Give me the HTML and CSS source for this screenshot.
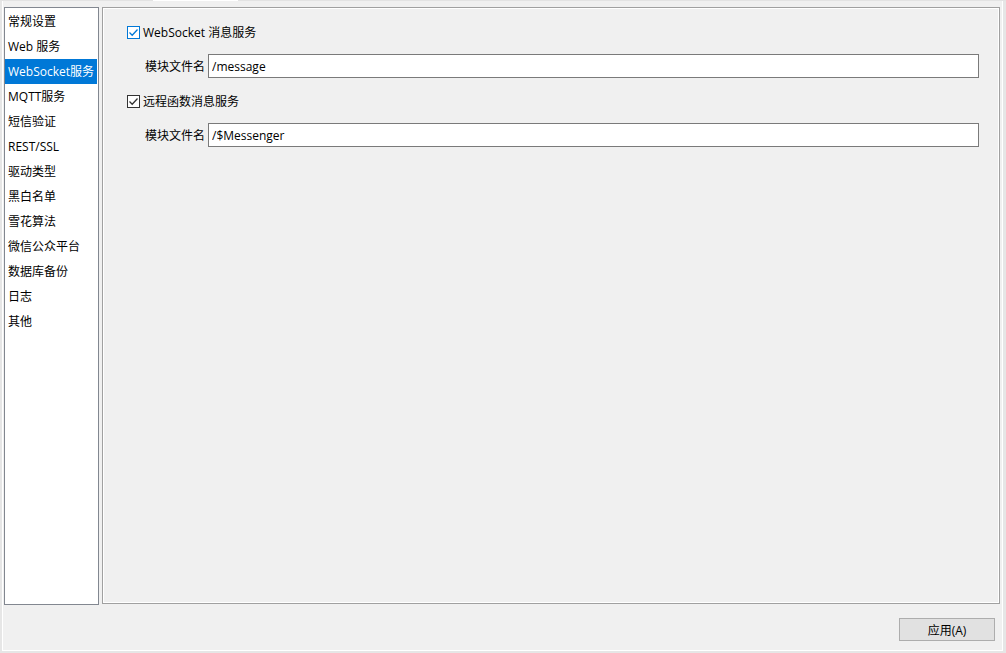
FILE: index.html
```html
<!DOCTYPE html>
<html lang="zh-CN">
<head>
    <meta charset="UTF-8">
    <title>设置</title>
    <link rel="stylesheet" href="styles.css">
</head>
<body>
    <div class="window">
        <div class="topline"><span class="tab-gap"></span></div>
        <div class="main">
            <div class="nav-list">
                <div class="nav-item">常规设置</div>
                <div class="nav-item">Web 服务</div>
                <div class="nav-item selected">WebSocket服务</div>
                <div class="nav-item">MQTT服务</div>
                <div class="nav-item">短信验证</div>
                <div class="nav-item">REST/SSL</div>
                <div class="nav-item">驱动类型</div>
                <div class="nav-item">黑白名单</div>
                <div class="nav-item">雪花算法</div>
                <div class="nav-item">微信公众平台</div>
                <div class="nav-item">数据库备份</div>
                <div class="nav-item">日志</div>
                <div class="nav-item">其他</div>
            </div>

            <div class="panel">
                <label class="check-row">
                    <span class="checkbox focused">
                        <svg width="11" height="11" viewBox="0 0 11 11"><path d="M1.5 5.5 L4.2 8.2 L9.5 2.5" fill="none" stroke="#0078d7" stroke-width="1.3"/></svg>
                    </span>
                    <span>WebSocket 消息服务</span>
                </label>
                <div class="field-row">
                    <span class="field-label">模块文件名</span>
                    <input class="field-input" type="text" value="/message">
                </div>

                <label class="check-row">
                    <span class="checkbox">
                        <svg width="11" height="11" viewBox="0 0 11 11"><path d="M1.5 5.5 L4.2 8.2 L9.5 2.5" fill="none" stroke="#333" stroke-width="1.3"/></svg>
                    </span>
                    <span>远程函数消息服务</span>
                </label>
                <div class="field-row">
                    <span class="field-label">模块文件名</span>
                    <input class="field-input" type="text" value="/$Messenger">
                </div>
            </div>
        </div>
        <div class="footer">
            <button class="btn">应用(A)</button>
        </div>
    </div>
</body>
</html>
```

FILE: styles.css
```css
* {
    box-sizing: border-box;
}
html, body {
    margin: 0;
    padding: 0;
    background: #e6e6e6;
}
body {
    font-family: "Open Sans", "Noto Sans CJK SC", sans-serif;
    font-size: 12px;
    color: #000;
}
.window {
    width: 1006px;
    height: 653px;
    background: #f0f0f0;
    border-left: 2px solid #e6e6e6;
    border-right: 3px solid #e6e6e6;
    border-bottom: 2px solid #e6e6e6;
    box-shadow: inset 1px 0 0 #fff, inset -1px -1px 0 #fff;
    display: flex;
    flex-direction: column;
}
.topline {
    height: 1px;
    background: #e3e3e3;
    margin-left: -2px;
    margin-right: -3px;
}
.tab-gap {
    display: block;
    margin-left: 153px;
    width: 85px;
    height: 1px;
    background: #fff;
}
.main {
    display: flex;
    gap: 3px;
    padding: 6px 3px 0 2px;
    align-items: flex-start;
}
.nav-list {
    width: 95px;
    height: 598px;
    background: #fff;
    border: 1px solid #828790;
    padding: 1px 0 0 0;
    overflow: hidden;
}
.nav-item {
    height: 25px;
    line-height: 26px;
    padding-left: 3px;
    margin-right: 1px;
    white-space: nowrap;
    overflow: hidden;
}
.nav-item.selected {
    background: #0078d7;
    color: #fff;
}
.panel {
    flex: 1;
    height: 597px;
    border: 1px solid #a0a0a0;
    box-shadow: inset 0 0 0 1px #fff;
    padding: 14px 20px 0 24px;
}
.check-row {
    display: flex;
    align-items: center;
    gap: 3px;
    height: 20px;
    line-height: 21px;
}
.checkbox {
    width: 13px;
    height: 13px;
    border: 1px solid #333;
    background: #fff;
    display: flex;
    align-items: center;
    justify-content: center;
}
.checkbox.focused {
    border-color: #0078d7;
}
.field-row {
    display: flex;
    align-items: center;
    gap: 3px;
    height: 24px;
    margin: 12px 0 13px 18px;
}
.field-label {
    white-space: nowrap;
}
.field-input {
    flex: 1;
    height: 24px;
    border: 1px solid #7a7a7a;
    background: #fff;
    padding: 0 3px;
    font-family: inherit;
    font-size: 12px;
    color: #000;
    outline: none;
}
.footer {
    flex: 1;
    display: flex;
    justify-content: flex-end;
    align-items: flex-start;
    padding: 13px 8px 0 0;
}
.btn {
    width: 96px;
    height: 23px;
    background: #e1e1e1;
    border: 1px solid #adadad;
    font-family: inherit;
    font-size: 12px;
    color: #000;
    padding: 0;
}
```
